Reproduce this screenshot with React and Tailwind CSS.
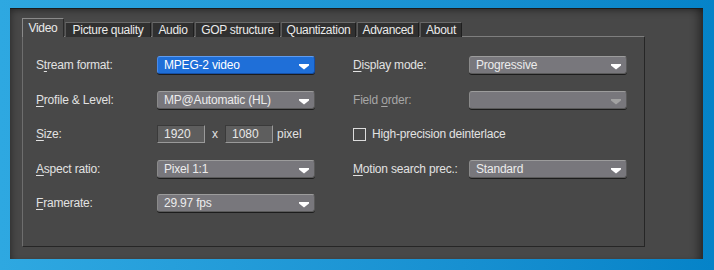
import React from 'react';

const font = { fontFamily: '"Liberation Sans", Arial, sans-serif' };

const tabs = [
  { name: 'Video', w: 'w-[42px]', active: true },
  { name: 'Picture quality', w: 'w-[86px]' },
  { name: 'Audio', w: 'w-[42px]' },
  { name: 'GOP structure', w: 'w-[85px]' },
  { name: 'Quantization', w: 'w-[75px]' },
  { name: 'Advanced', w: 'w-[62px]' },
  { name: 'About', w: 'w-[42px]' },
];

const Arrow = ({ dim }) => (
  <svg width="10" height="6" viewBox="0 0 10 6" className="absolute right-[5px] top-[7px]">
    <path d="M0 0h10v1.5L5 5.5 0 1.5z" fill={dim ? '#a2a2a2' : '#ffffff'} />
  </svg>
);

const Select = ({ value, blue, dim, w = 'w-[158px]' }) => (
  <div
    className={`relative h-[18px] ${w} rounded-[3px] border pl-[6px] text-[12px] tracking-[-0.2px] leading-[16px] whitespace-nowrap shadow-[0_1px_0_#1c1c1c] ${
      blue
        ? 'bg-[#1f6fd8] text-white border-t-[#5f9cf0] border-l-[#4a8ae8] border-r-[#1550a8] border-b-[#1550a8]'
        : 'bg-[#78777c] text-[#ececec] border-t-[#9c9c9c] border-l-[#8a8a8a] border-r-[#5a5a5a] border-b-[#5a5a5a]'
    }`}
  >
    {value}
    <Arrow dim={dim} />
  </div>
);

const Label = ({ pre = '', u, post, dim }) => (
  <div
    className={`text-[12px] tracking-[-0.2px] leading-[18px] whitespace-nowrap ${
      dim ? 'text-[#a6a6a6]' : 'text-[#e2e2e2]'
    }`}
  >
    {pre}
    <span className="underline underline-offset-[2px]">{u}</span>
    {post}
  </div>
);

const Field = ({ label, children, lw = 'w-[121px]' }) => (
  <div className="flex items-center h-[18px]">
    <div className={`${lw} shrink-0`}>{label}</div>
    {children}
  </div>
);

const NumBox = ({ value }) => (
  <div className="h-[18px] w-[48px] bg-[#5e5e5e] border border-t-[#3a3a3a] border-l-[#3a3a3a] border-r-[#9a9a9a] border-b-[#9a9a9a] pl-[6px] text-[12px] leading-[16px] text-[#e8e8e8]">
    {value}
  </div>
);

export default function App() {
  return (
    <div
      className="w-[714px] h-[270px] bg-gradient-to-r from-[#2ea8e1] to-[#0583c8] pt-[8px] pl-[10px]"
      style={font}
    >
      <div className="w-[693px] h-[251px] bg-[#484848] border-t border-[#1c1c1c] shadow-[inset_-10px_0_10px_-6px_rgba(0,0,0,0.45),inset_4px_4px_8px_-4px_rgba(0,0,0,0.5)] pl-[12px] pt-[9px]">
        <div className="flex items-end gap-px h-[19px]">
          {tabs.map((t) => (
            <div
              key={t.name}
              className={`relative z-10 ${t.w} text-center text-[12px] tracking-[-0.3px] whitespace-nowrap text-[#eaeaea] border-t border-l border-r ${
                t.active
                  ? 'h-[19px] bg-[#484848] border-t-[#8a8a8a] border-l-[#8a8a8a] border-r-[#2a2a2a] leading-[19px]'
                  : 'h-[15px] bg-[#303030] border-t-[#6a6a6a] border-l-[#5a5a5a] border-r-[#1e1e1e] leading-[15px]'
              }`}
            >
              {t.name}
            </div>
          ))}
        </div>
        <div className="-mt-px w-[623px] h-[211px] border border-t-[#7e7e7e] border-l-[#6e6e6e] border-r-[#262626] border-b-[#262626] pl-[13px] pt-[19px]">
          <div className="grid grid-cols-[279px_274px] gap-x-[38px] grid-rows-[18px_18px_18px_18px_18px] gap-y-[16.5px]">
            <Field label={<Label pre="S" u="t" post="ream format:" />}>
              <Select value="MPEG-2 video" blue />
            </Field>
            <Field lw="w-[116px]" label={<Label u="D" post="isplay mode:" />}>
              <Select value="Progressive" />
            </Field>

            <Field label={<Label u="P" post="rofile & Level:" />}>
              <Select value="MP@Automatic (HL)" />
            </Field>
            <Field lw="w-[116px]" label={<Label pre="Field " u="o" post="rder:" dim />}>
              <Select value="" dim />
            </Field>

            <Field label={<Label u="S" post="ize:" />}>
              <NumBox value="1920" />
              <span className="w-[20px] text-center text-[12px] text-[#e2e2e2]">x</span>
              <NumBox value="1080" />
              <span className="ml-[4px] text-[12px] text-[#e2e2e2]">pixel</span>
            </Field>
            <div className="flex items-center h-[18px]">
              <div className="w-[13px] h-[13px] border border-[#dcdcdc]" />
              <span className="ml-[6px] text-[12px] tracking-[-0.2px] text-[#e2e2e2]">High-precision deinterlace</span>
            </div>

            <Field label={<Label u="A" post="spect ratio:" />}>
              <Select value="Pixel 1:1" />
            </Field>
            <Field lw="w-[116px]" label={<Label u="M" post="otion search prec.:" />}>
              <Select value="Standard" />
            </Field>

            <Field label={<Label u="F" post="ramerate:" />}>
              <Select value="29.97 fps" />
            </Field>
          </div>
        </div>
      </div>
    </div>
  );
}
